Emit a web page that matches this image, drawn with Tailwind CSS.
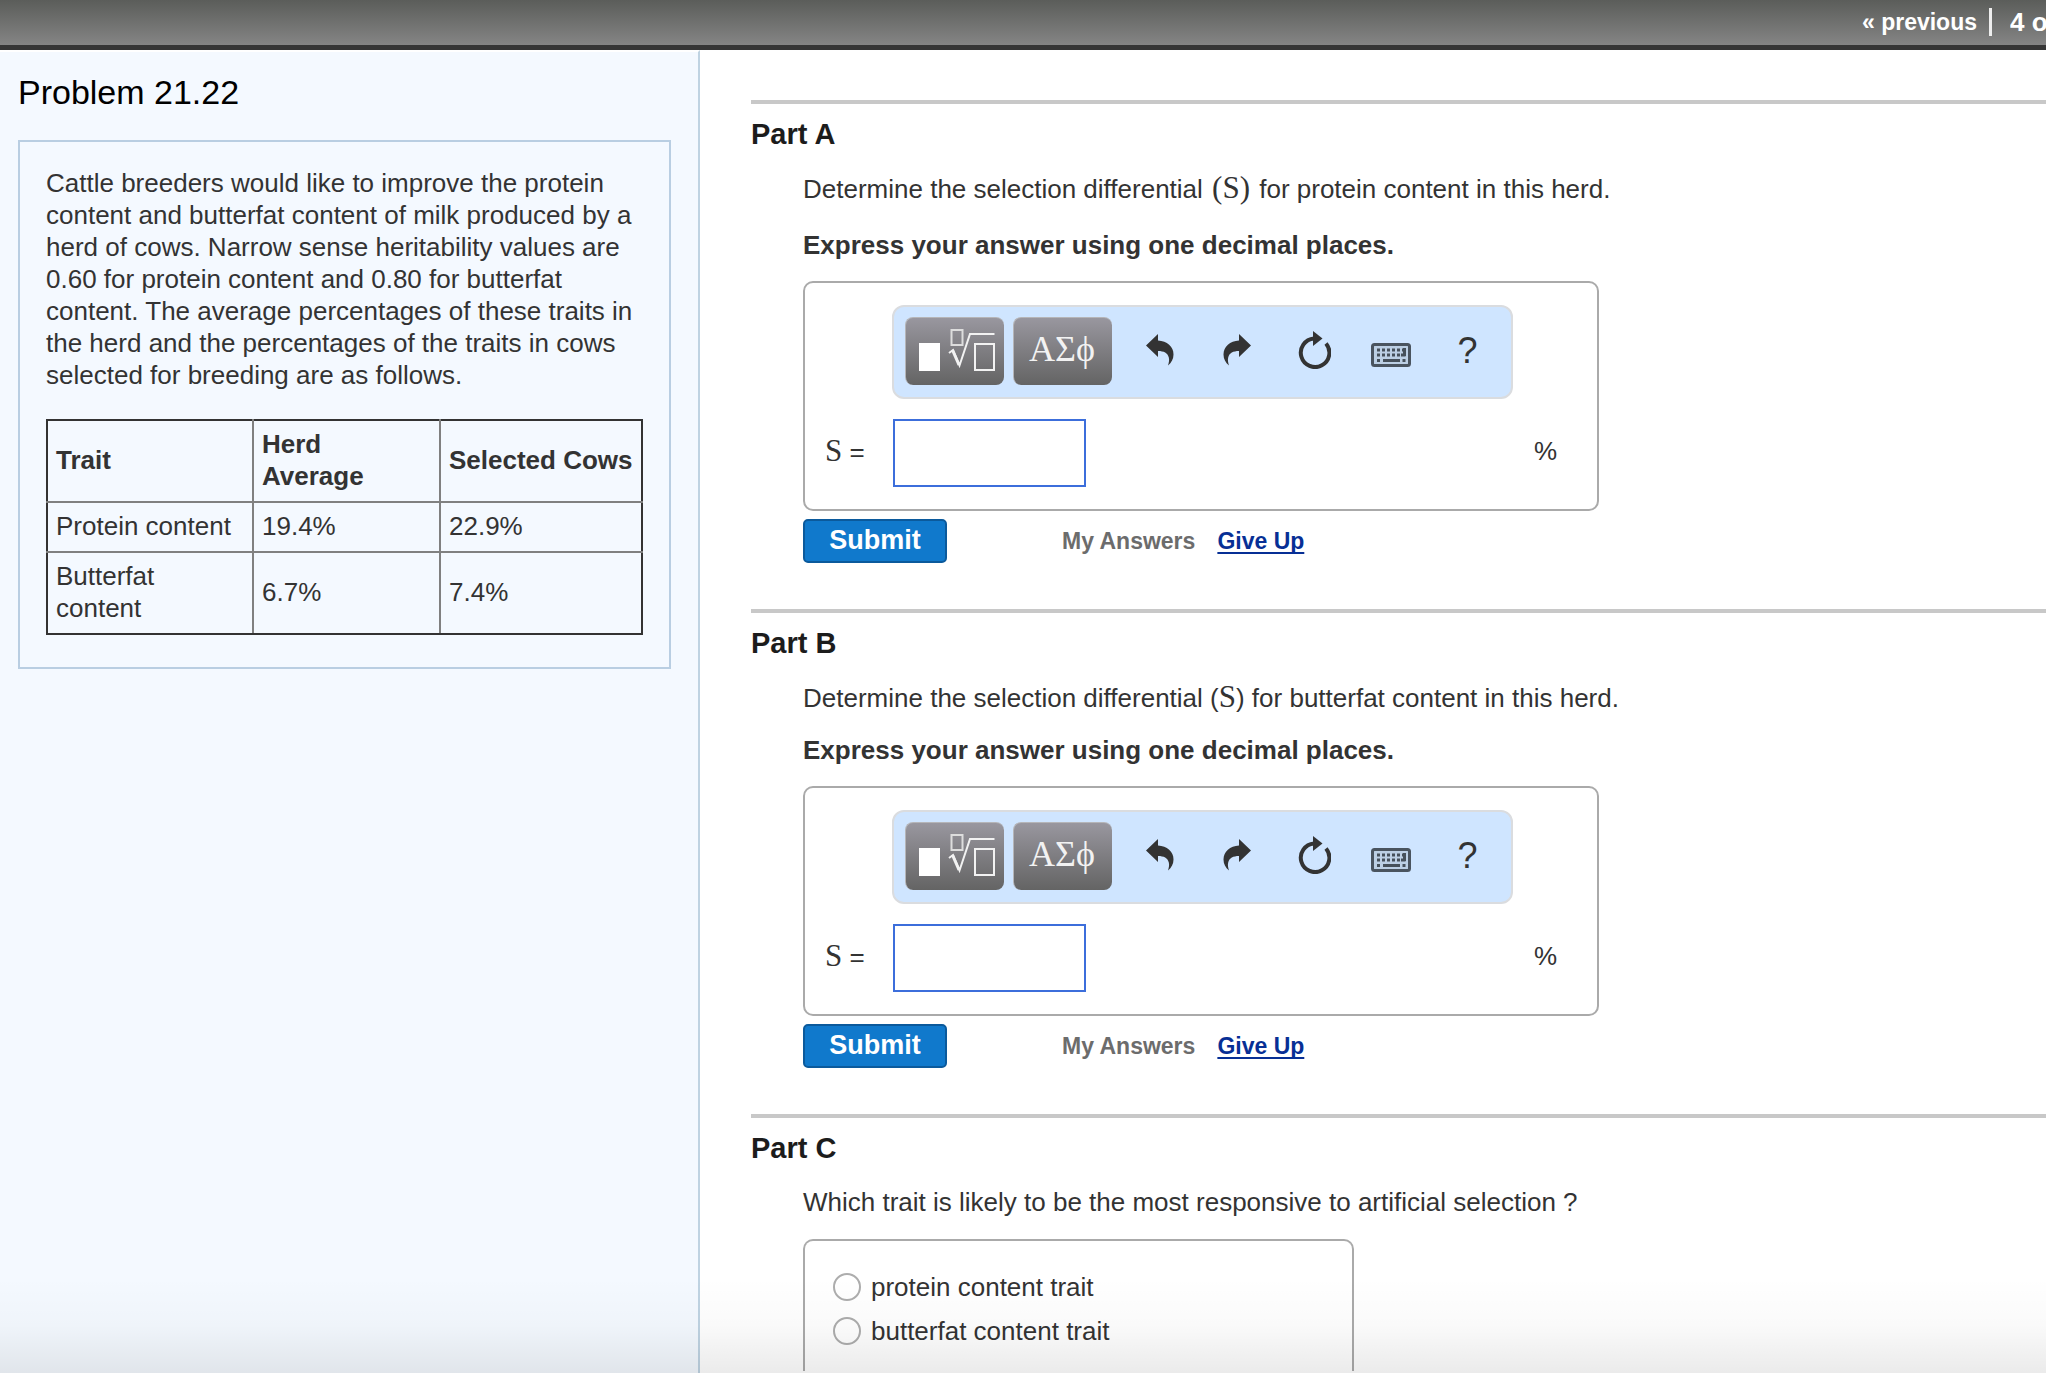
<!DOCTYPE html>
<html lang="en">
<head>
<meta charset="utf-8">
<title>Problem 21.22</title>
<script src="https://cdn.jsdelivr.net/npm/@tailwindcss/browser@4"></script>
</head>
<body class="relative flex h-screen flex-col overflow-hidden bg-white font-['Liberation_Sans',Arial,sans-serif] text-[26px] leading-[32px] text-[#333]">

<svg class="hidden" aria-hidden="true">
  <symbol id="i-root" viewBox="1 1 98 67">
    <rect x="14" y="26" width="21" height="28" fill="#fff"/>
    <g fill="none" stroke="#f2f2f2" stroke-width="2">
      <rect x="46.500" y="13" width="11" height="15" stroke="#ddd"/>
      <path d="M44 36l4-3 6.500 15.500L65 17h24.500"/>
      <path d="M47.500 33l6.500 15" stroke-width="3"/>
      <rect x="70" y="27" width="19" height="26"/>
    </g>
  </symbol>
  <symbol id="i-undo" viewBox="0 0 28 32">
    <path fill="#333" d="M0 11.500L12 0v6.500c9 .5 15.500 6 15.500 14 0 4.500-2 8-5.500 11 .8-3 1.500-5 .8-8-1-4.500-5-6.500-10.800-6.500V23z"/>
  </symbol>
  <symbol id="i-reset" viewBox="0 0 34 38">
    <path fill="none" stroke="#333" stroke-width="4" d="M17 7.500A14.300 14.300 0 1 0 29 12.500"/>
    <path fill="#333" d="M16 0l9.500 7.500L16 15z"/>
  </symbol>
  <symbol id="i-keys" viewBox="0 0 40 24">
    <rect x="1.500" y="1.500" width="37" height="21" rx="2" fill="#bccfe4" stroke="#4a545f" stroke-width="3"/>
    <g fill="none" stroke="#46505a">
      <path stroke-width="3" stroke-dasharray="3 2" d="M6 7h26"/>
      <path stroke-width="3" stroke-dasharray="3 2" d="M6 12h24"/>
      <path stroke-width="3" d="M6 17.500h3M12 17.500h17M31.500 17.500h3M30 12h4.500M33.500 5v8"/>
    </g>
  </symbol>
</svg>

<header class="flex h-[50px] shrink-0 items-start justify-end border-b-[5px] border-[#363636] bg-linear-to-b from-[#5b5d5a] to-[#858585] font-bold text-white">
  <a href="#" class="mt-2 text-[23px] leading-[28px]">« previous</a>
  <span class="mt-2 ml-3 h-7 w-[3px] bg-[#eee]"></span>
  <span class="mt-2 ml-[18px] w-9 overflow-hidden leading-[28px] whitespace-nowrap">4 o</span>
</header>

<div class="flex min-h-0 flex-1">
  <aside class="w-[700px] shrink-0 border-t-2 border-r-2 border-t-white border-r-[#bfd3e2] bg-[#f4f9ff] pt-5 pr-[27px] pl-[18px]">
    <h1 class="text-[34px] leading-[40px] text-black">Problem 21.22</h1>
    <section class="mt-7 border-2 border-[#b9cee2] p-[26px] pt-[25px] pb-8">
      <p>Cattle breeders would like to improve the protein content and butterfat content of milk produced by a herd of cows. Narrow sense heritability values are 0.60 for protein content and 0.80 for butterfat content. The average percentages of these traits in the herd and the percentages of the traits in cows selected for breeding are as follows.</p>
      <table class="mt-7 w-[597px] table-fixed border-collapse border-2 border-[#333] text-left">
        <colgroup><col class="w-[206px]"><col class="w-[187px]"><col></colgroup>
        <thead>
          <tr>
            <th class="border-2 border-[#333] border-r-[#808080] border-b-[#808080] px-2 pt-[7px] pb-[9px]">Trait</th>
            <th class="border-2 border-[#808080] border-t-[#333] px-2 pt-[7px] pb-[9px]">Herd<br>Average</th>
            <th class="border-2 border-[#333] border-b-[#808080] border-l-[#808080] pt-[7px] pr-0 pb-[9px] pl-2 whitespace-nowrap">Selected Cows</th>
          </tr>
        </thead>
        <tbody>
          <tr>
            <td class="border-2 border-[#808080] border-l-[#333] px-2 pt-[7px] pb-[9px]">Protein content</td>
            <td class="border-2 border-[#808080] px-2 pt-[7px] pb-[9px]">19.4%</td>
            <td class="border-2 border-[#808080] border-r-[#333] px-2 pt-[7px] pb-[9px]">22.9%</td>
          </tr>
          <tr>
            <td class="border-2 border-[#333] border-t-[#808080] border-r-[#808080] px-2 pt-[7px] pb-[9px]">Butterfat content</td>
            <td class="border-2 border-[#808080] border-b-[#333] px-2 pt-[7px] pb-[9px]">6.7%</td>
            <td class="border-2 border-[#333] border-t-[#808080] border-l-[#808080] px-2 pt-[7px] pb-[9px]">7.4%</td>
          </tr>
        </tbody>
      </table>
    </section>
  </aside>

  <main class="flex min-w-0 flex-1 flex-col pt-[50px] pl-[51px]">
    <section class="shrink-0 border-t-4 border-[#c8c8c8] pt-[14px] pb-[46px]">
      <h2 class="text-[29px] font-bold text-[#1c1c1c]">Part A</h2>
      <div class="pl-[52px]">
        <p class="mt-[22px]">Determine the selection differential <span class="mx-[2px] font-['Liberation_Serif',serif] text-[31px] leading-none">(S)</span> for protein content in this herd.</p>
        <p class="mt-6 font-bold">Express your answer using one decimal places.</p>
        <div class="mt-5 w-[796px] rounded-[10px] border-2 border-[#aaa] pt-[22px] pb-[22px]">
          <div class="ml-[87px] flex h-[94px] w-[621px] items-center rounded-xl border-2 border-[#dadcdf] bg-[#cfe5ff] pb-[2px] pl-[11px]">
            <button type="button" aria-label="Templates" class="h-[68px] w-[99px] rounded-lg border-t border-l border-[#b5b5b8] bg-linear-to-b from-[#99979f] to-[#646464]"><svg class="h-[67px] w-[98px]"><use href="#i-root"/></svg></button>
            <button type="button" class="ml-[9px] h-[68px] w-[99px] rounded-lg border-t border-l border-[#b5b5b8] bg-linear-to-b from-[#99979f] to-[#646464] pr-[2px] pb-[6px] font-['Liberation_Serif',serif] text-[36px] text-[#f2f2f2]">ΑΣϕ</button>
            <div class="ml-[9px] flex">
              <button type="button" aria-label="Undo" class="flex h-[68px] w-[77px] items-center justify-center pb-[2px]"><svg class="h-8 w-7"><use href="#i-undo"/></svg></button>
              <button type="button" aria-label="Redo" class="flex h-[68px] w-[77px] items-center justify-center pb-[2px]"><svg class="h-8 w-7 -scale-x-100"><use href="#i-undo"/></svg></button>
              <button type="button" aria-label="Reset" class="flex h-[68px] w-[77px] items-center justify-center pb-[2px]"><svg class="h-[38px] w-[34px]"><use href="#i-reset"/></svg></button>
              <button type="button" aria-label="Keyboard" class="flex h-[68px] w-[77px] items-center justify-center pt-2"><svg class="h-6 w-10"><use href="#i-keys"/></svg></button>
              <button type="button" class="h-[68px] w-[77px] text-[36px]">?</button>
            </div>
          </div>
          <div class="mt-5 flex items-center pr-10 pl-5">
            <label for="a" class="w-[68px] pb-1"><span class="font-['Liberation_Serif',serif] text-[31px] leading-none">S</span> =</label>
            <input id="a" type="text" class="h-[68px] w-[193px] border-2 border-[#3c6edb] bg-white px-2">
            <span class="ml-auto pb-1">%</span>
          </div>
        </div>
        <div class="mt-2 flex items-center text-[23px] font-bold">
          <button type="button" class="h-11 w-36 rounded-[5px] border-2 border-[#0b5a9c] bg-[#1079cc] pb-[2px] text-[27px] leading-[32px] text-white">Submit</button>
          <span class="ml-[115px] text-[#6c6c6c]">My Answers</span>
          <a href="#" class="ml-[22px] text-[#072f95] underline decoration-2 underline-offset-3 [text-decoration-skip-ink:none]">Give Up</a>
        </div>
      </div>
    </section>

    <section class="shrink-0 border-t-4 border-[#c8c8c8] pt-[14px] pb-[46px]">
      <h2 class="text-[29px] font-bold text-[#1c1c1c]">Part B</h2>
      <div class="pl-[52px]">
        <p class="mt-[22px]">Determine the selection differential (<span class="font-['Liberation_Serif',serif] text-[31px] leading-none">S</span>) for butterfat content in this herd.</p>
        <p class="mt-5 font-bold">Express your answer using one decimal places.</p>
        <div class="mt-5 w-[796px] rounded-[10px] border-2 border-[#aaa] pt-[22px] pb-[22px]">
          <div class="ml-[87px] flex h-[94px] w-[621px] items-center rounded-xl border-2 border-[#dadcdf] bg-[#cfe5ff] pb-[2px] pl-[11px]">
            <button type="button" aria-label="Templates" class="h-[68px] w-[99px] rounded-lg border-t border-l border-[#b5b5b8] bg-linear-to-b from-[#99979f] to-[#646464]"><svg class="h-[67px] w-[98px]"><use href="#i-root"/></svg></button>
            <button type="button" class="ml-[9px] h-[68px] w-[99px] rounded-lg border-t border-l border-[#b5b5b8] bg-linear-to-b from-[#99979f] to-[#646464] pr-[2px] pb-[6px] font-['Liberation_Serif',serif] text-[36px] text-[#f2f2f2]">ΑΣϕ</button>
            <div class="ml-[9px] flex">
              <button type="button" aria-label="Undo" class="flex h-[68px] w-[77px] items-center justify-center pb-[2px]"><svg class="h-8 w-7"><use href="#i-undo"/></svg></button>
              <button type="button" aria-label="Redo" class="flex h-[68px] w-[77px] items-center justify-center pb-[2px]"><svg class="h-8 w-7 -scale-x-100"><use href="#i-undo"/></svg></button>
              <button type="button" aria-label="Reset" class="flex h-[68px] w-[77px] items-center justify-center pb-[2px]"><svg class="h-[38px] w-[34px]"><use href="#i-reset"/></svg></button>
              <button type="button" aria-label="Keyboard" class="flex h-[68px] w-[77px] items-center justify-center pt-2"><svg class="h-6 w-10"><use href="#i-keys"/></svg></button>
              <button type="button" class="h-[68px] w-[77px] text-[36px]">?</button>
            </div>
          </div>
          <div class="mt-5 flex items-center pr-10 pl-5">
            <label for="b" class="w-[68px] pb-1"><span class="font-['Liberation_Serif',serif] text-[31px] leading-none">S</span> =</label>
            <input id="b" type="text" class="h-[68px] w-[193px] border-2 border-[#3c6edb] bg-white px-2">
            <span class="ml-auto pb-1">%</span>
          </div>
        </div>
        <div class="mt-2 flex items-center text-[23px] font-bold">
          <button type="button" class="h-11 w-36 rounded-[5px] border-2 border-[#0b5a9c] bg-[#1079cc] pb-[2px] text-[27px] leading-[32px] text-white">Submit</button>
          <span class="ml-[115px] text-[#6c6c6c]">My Answers</span>
          <a href="#" class="ml-[22px] text-[#072f95] underline decoration-2 underline-offset-3 [text-decoration-skip-ink:none]">Give Up</a>
        </div>
      </div>
    </section>

    <section class="flex flex-1 flex-col border-t-4 border-[#c8c8c8] pt-[14px]">
      <h2 class="text-[29px] font-bold text-[#1c1c1c]">Part C</h2>
      <div class="flex flex-1 flex-col pl-[52px]">
        <p class="mt-[22px]">Which trait is likely to be the most responsive to artificial selection ?</p>
        <div class="mt-[21px] mb-[2px] w-[551px] flex-1 rounded-t-[10px] border-2 border-b-0 border-[#aaa] pt-6 pl-7">
          <label class="flex h-11 items-center"><input type="radio" name="trait" class="mr-[10px] size-7 appearance-none rounded-full border-2 border-[#adadad] bg-white">protein content trait</label>
          <label class="flex h-11 items-center"><input type="radio" name="trait" class="mr-[10px] size-7 appearance-none rounded-full border-2 border-[#adadad] bg-white">butterfat content trait</label>
        </div>
      </div>
    </section>
  </main>
</div>

<div class="pointer-events-none absolute inset-x-0 bottom-0 h-24 bg-linear-to-b from-black/0 via-black/2 to-black/8"></div>
</body>
</html>
